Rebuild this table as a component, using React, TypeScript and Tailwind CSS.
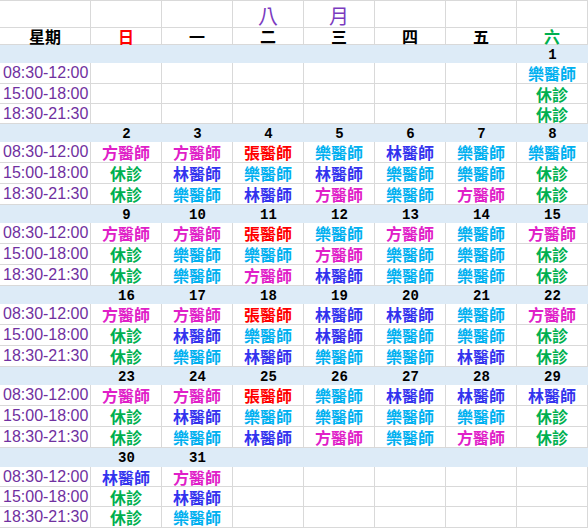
import React from "react";

type Doc = "方" | "林" | "樂" | "張" | "休";
type Day = { d: number; s: [Doc, Doc, Doc] } | null;

const colorOf: Record<Doc, string> = {
  方: "text-[#e020c8]",
  林: "text-[#3333ee]",
  樂: "text-[#00b0f0]",
  張: "text-[#ff0000]",
  休: "text-[#00b050]",
};

const label = (d: Doc) => (d === "休" ? "休診" : d + "醫師");

const weeks: Day[][] = [
  [null, null, null, null, null, null, { d: 1, s: ["樂", "休", "休"] }],
  [
    { d: 2, s: ["方", "休", "休"] },
    { d: 3, s: ["方", "林", "樂"] },
    { d: 4, s: ["張", "樂", "林"] },
    { d: 5, s: ["樂", "林", "方"] },
    { d: 6, s: ["林", "樂", "樂"] },
    { d: 7, s: ["樂", "樂", "方"] },
    { d: 8, s: ["樂", "休", "休"] },
  ],
  [
    { d: 9, s: ["方", "休", "休"] },
    { d: 10, s: ["方", "樂", "樂"] },
    { d: 11, s: ["張", "樂", "方"] },
    { d: 12, s: ["樂", "方", "林"] },
    { d: 13, s: ["方", "樂", "樂"] },
    { d: 14, s: ["樂", "樂", "樂"] },
    { d: 15, s: ["方", "休", "休"] },
  ],
  [
    { d: 16, s: ["方", "休", "休"] },
    { d: 17, s: ["方", "林", "樂"] },
    { d: 18, s: ["張", "樂", "林"] },
    { d: 19, s: ["林", "林", "樂"] },
    { d: 20, s: ["林", "樂", "樂"] },
    { d: 21, s: ["樂", "樂", "林"] },
    { d: 22, s: ["方", "休", "休"] },
  ],
  [
    { d: 23, s: ["方", "休", "休"] },
    { d: 24, s: ["方", "林", "樂"] },
    { d: 25, s: ["張", "樂", "林"] },
    { d: 26, s: ["樂", "樂", "方"] },
    { d: 27, s: ["林", "樂", "樂"] },
    { d: 28, s: ["林", "樂", "方"] },
    { d: 29, s: ["林", "休", "休"] },
  ],
  [
    { d: 30, s: ["林", "休", "休"] },
    { d: 31, s: ["方", "林", "樂"] },
    null,
    null,
    null,
    null,
    null,
  ],
];

const times = ["08:30-12:00", "15:00-18:00", "18:30-21:30"];

const bandH = ["h-[18px]", "h-[18px]", "h-[18px]", "h-[18px]", "h-[18px]", "h-[19px]"];
const rowH = [
  ["h-[21px]", "h-[20px]", "h-[20px]"],
  ["h-[21px]", "h-[21px]", "h-[21px]"],
  ["h-[21px]", "h-[21px]", "h-[21px]"],
  ["h-[21px]", "h-[21px]", "h-[21px]"],
  ["h-[21px]", "h-[21px]", "h-[21px]"],
  ["h-[20px]", "h-[20px]", "h-[21px]"],
];

const line = "border-r border-b border-[#d9d9d9]";

const dayNames: { t: string; c: string }[] = [
  { t: "日", c: "text-[#ff0000]" },
  { t: "一", c: "text-black" },
  { t: "二", c: "text-black" },
  { t: "三", c: "text-black" },
  { t: "四", c: "text-black" },
  { t: "五", c: "text-black" },
  { t: "六", c: "text-[#00b050]" },
];

export default function App() {
  return (
    <div className="w-[588px] h-[528px] overflow-hidden bg-white font-['Noto_Sans_CJK_TC','Noto_Sans',sans-serif]">
      <div className="grid grid-cols-[91px_repeat(7,71px)]">
        {/* header row 1 */}
        {Array.from({ length: 8 }).map((_, i) => (
          <div
            key={"h1" + i}
            className={`${line} border-t h-[28px] flex items-end justify-center pb-[1px] text-[20px] leading-none text-[#7b3bbf]`}
          >
            {i === 3 ? "八" : i === 4 ? "月" : ""}
          </div>
        ))}
        {/* header row 2 */}
        <div
          className={`${line} h-[17px] flex items-end justify-center text-[16px] font-bold leading-none text-black`}
        >
          星期
        </div>
        {dayNames.map((d, i) => (
          <div
            key={"h2" + i}
            className={`${line} h-[17px] flex items-end justify-center text-[16px] font-bold leading-none ${d.c}`}
          >
            {d.t}
          </div>
        ))}

        {weeks.map((wk, wi) => (
          <React.Fragment key={"w" + wi}>
            <div className={`${bandH[wi]} bg-[#ddebf7]`} />
            {wk.map((day, di) => (
              <div
                key={"b" + wi + di}
                className={`${bandH[wi]} bg-[#ddebf7] flex items-center justify-center pt-[1px] text-[14px] font-bold leading-none text-black font-['Liberation_Mono','Courier_New',monospace]`}
              >
                {day ? day.d : ""}
              </div>
            ))}
            {times.map((t, ti) => (
              <React.Fragment key={"r" + wi + ti}>
                <div
                  className={`${line} ${rowH[wi][ti]} flex items-center pl-[3px] text-[16px] leading-none text-[#7030a0] whitespace-nowrap font-['Liberation_Sans',Arial,sans-serif]`}
                >
                  {t}
                </div>
                {wk.map((day, di) => (
                  <div
                    key={"c" + wi + ti + di}
                    className={`${line} ${rowH[wi][ti]} flex items-center justify-center text-[16px] font-bold leading-none ${
                      day ? colorOf[day.s[ti]] : ""
                    }`}
                  >
                    {day ? label(day.s[ti]) : ""}
                  </div>
                ))}
              </React.Fragment>
            ))}
          </React.Fragment>
        ))}
      </div>
    </div>
  );
}
